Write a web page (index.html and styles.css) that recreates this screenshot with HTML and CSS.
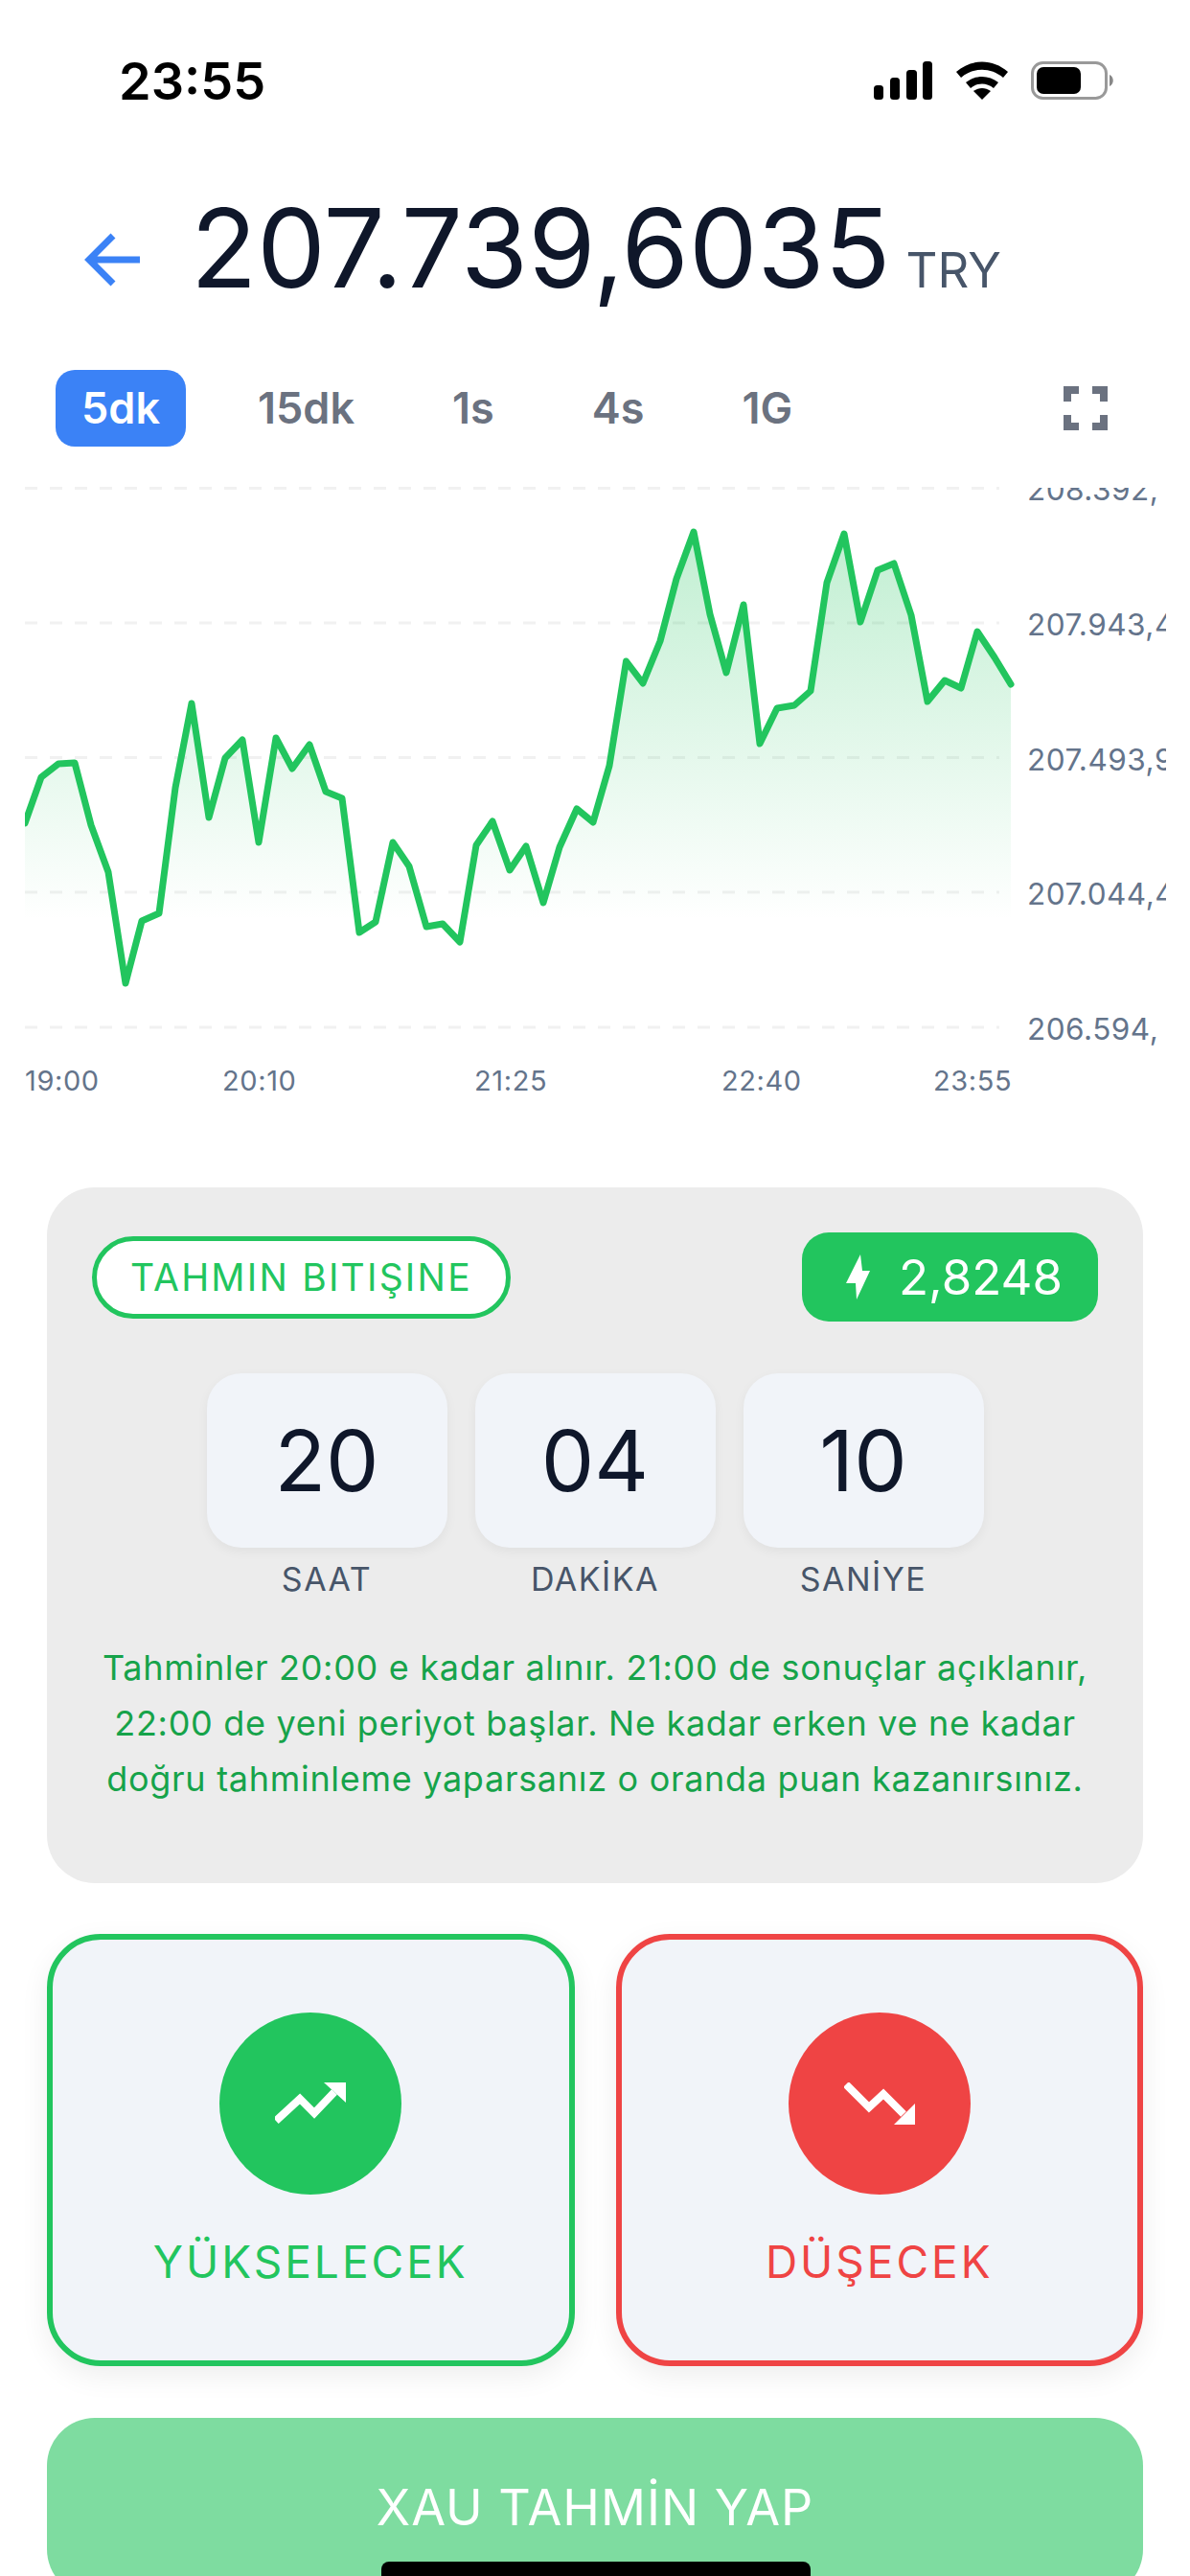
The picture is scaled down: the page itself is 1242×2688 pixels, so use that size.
FILE: index.html
```html
<!DOCTYPE html>
<html lang="tr">

<head>
    <meta charset="UTF-8">
    <title>XAU Tahmin</title>
    <link rel="stylesheet" href="styles.css">
</head>

<body>
    <div class="screen">
        <div class="status-bar">
            <span class="status-time">23:55</span>
            <svg class="status-icons" width="252" height="40" viewBox="0 0 252 40">
                <rect x="0" y="25" width="10" height="15" rx="3.5" />
                <rect x="17" y="17" width="10" height="23" rx="3.5" />
                <rect x="34" y="9" width="11" height="31" rx="3.5" />
                <rect x="51" y="0" width="10" height="40" rx="3.5" />
                <path d="M86 11 C 102 -3 124 -3 140 11 L 135 17 C 122 6 104 6 91 17 Z" />
                <path d="M96 22 C 106 14 120 14 130 22 L 125 28 C 118 22 108 22 101 28 Z" />
                <path d="M104 31 C 110 27 116 27 122 31 L 113 40 Z" />
                <rect x="165.500" y="1.500" width="77" height="37" rx="11" fill="#fff" stroke="#999" stroke-width="3" />
                <rect x="170" y="6" width="46" height="28" rx="7" />
                <path d="M246 14 C 251 16 251 24 246 26 Z" fill="#888" />
            </svg>
        </div>

        <div class="price-row">
            <svg class="back-icon" width="60" height="60" viewBox="0 0 60 60">
                <path d="M59 29 H8 M31 4 L6 29 L31 54" />
            </svg>
            <span class="price">207.739,6035</span>
            <span class="currency">TRY</span>
        </div>

        <div class="tabs">
            <div class="tab tab-active">5dk</div>
            <div class="tab">15dk</div>
            <div class="tab">1s</div>
            <div class="tab">4s</div>
            <div class="tab">1G</div>
            <svg class="expand-icon" width="46" height="46" viewBox="0 0 46 46">
                <path d="M4 16 V4 H16 M30 4 H42 V16 M42 30 V42 H30 M16 42 H4 V30" />
            </svg>
        </div>

        <div class="chart">
            <svg class="chart-plot" width="1034" height="570" viewBox="26 505 1034 570">
                <defs>
                    <linearGradient id="areaFill" gradientUnits="userSpaceOnUse" x1="0" y1="555" x2="0" y2="960">
                        <stop offset="0" stop-color="#22c55e" stop-opacity="0.28" />
                        <stop offset="1" stop-color="#22c55e" stop-opacity="0" />
                    </linearGradient>
                </defs>
                <g class="grid-lines">
                    <line x1="26" x2="1043" y1="509.5" y2="509.5" />
                    <line x1="26" x2="1043" y1="650" y2="650" />
                    <line x1="26" x2="1043" y1="790.5" y2="790.5" />
                    <line x1="26" x2="1043" y1="931" y2="931" />
                    <line x1="26" x2="1043" y1="1072" y2="1072" />
                </g>
                <polygon class="area"
                    points="26,859 43,811 61,797 78,796 95,861 113,910 131,1026 148,961 166,953 183,822 200,734 218,853 235,791 253,772 270,879 288,770 305,802 323,777 340,826 357,833 375,973 392,962 410,879 427,904 445,967 462,964 480,983 497,882 514,857 532,908 549,883 567,942 584,884 602,844 619,858 636,799 653.5,690 671,713 689,669 706,604 724,555 741,641 758,702 776,631 793,776 811,739 829,736 846,721 863,608 881,557 898,649 916,595 933,588 951,642 968,732 986,710 1003,718 1020,659 1038,686 1055,714 1055,1075 26,1075" />
                <polyline class="line"
                    points="26,859 43,811 61,797 78,796 95,861 113,910 131,1026 148,961 166,953 183,822 200,734 218,853 235,791 253,772 270,879 288,770 305,802 323,777 340,826 357,833 375,973 392,962 410,879 427,904 445,967 462,964 480,983 497,882 514,857 532,908 549,883 567,942 584,884 602,844 619,858 636,799 653.5,690 671,713 689,669 706,604 724,555 741,641 758,702 776,631 793,776 811,739 829,736 846,721 863,608 881,557 898,649 916,595 933,588 951,642 968,732 986,710 1003,718 1020,659 1038,686 1055,714" />
            </svg>
            <div class="y-labels">
                <span class="y-label">208.392,</span>
                <span class="y-label">207.943,4</span>
                <span class="y-label">207.493,9</span>
                <span class="y-label">207.044,4</span>
                <span class="y-label">206.594,</span>
            </div>
            <div class="x-labels">
                <span class="x-label">19:00</span>
                <span class="x-label">20:10</span>
                <span class="x-label">21:25</span>
                <span class="x-label">22:40</span>
                <span class="x-label">23:55</span>
            </div>
        </div>

        <div class="panel">
            <div class="panel-top">
                <div class="ends-pill">TAHMIN BITIŞINE</div>
                <div class="reward-chip">
                    <svg width="25" height="47" viewBox="0 0 25 47">
                        <path d="M15 0 L0 30 H10 L11 47 L25 17 H17 Z" />
                    </svg>
                    <span>2,8248</span>
                </div>
            </div>
            <div class="countdown">
                <div class="count-col">
                    <div class="count-box">20</div>
                    <div class="count-label">SAAT</div>
                </div>
                <div class="count-col">
                    <div class="count-box">04</div>
                    <div class="count-label">DAKİKA</div>
                </div>
                <div class="count-col">
                    <div class="count-box">10</div>
                    <div class="count-label">SANİYE</div>
                </div>
            </div>
            <p class="panel-note">Tahminler 20:00 e kadar alınır. 21:00 de sonuçlar açıklanır,<br>22:00 de yeni periyot başlar. Ne kadar erken ve ne kadar<br>doğru tahminleme yaparsanız o oranda puan kazanırsınız.</p>
        </div>

        <div class="choices">
            <div class="choice choice-up">
                <div class="choice-circle">
                    <svg width="74" height="44" viewBox="0 0 74 44">
                        <path class="trend" d="M1 40 L26 17 L41 32 L62 10" />
                        <path d="M51 0 H74 V21 Z" fill="#fff" />
                    </svg>
                </div>
                <div class="choice-label">YÜKSELECEK</div>
            </div>
            <div class="choice choice-down">
                <div class="choice-circle">
                    <svg width="74" height="44" viewBox="0 0 74 44">
                        <path class="trend" d="M2 2 L26 26 L41 12 L62 33" />
                        <path d="M52 44 H74 V22 Z" fill="#fff" />
                    </svg>
                </div>
                <div class="choice-label">DÜŞECEK</div>
            </div>
        </div>

        <div class="submit-btn">XAU TAHMİN YAP</div>
        <div class="home-bar"></div>
    </div>
</body>

</html>
```

FILE: styles.css
```css
body {
    margin: 0;
    background: #fff;
    font-family: Inter, "Liberation Sans", sans-serif;
}

.screen {
    position: relative;
    width: 1242px;
    height: 2688px;
    overflow: hidden;
    box-sizing: border-box;
    padding-top: 54px;
}

.status-bar {
    display: flex;
    justify-content: space-between;
    align-items: center;
    height: 60px;
    padding: 0 78px 0 124px;
}

.status-time {
    font-size: 54px;
    font-weight: 600;
    color: #000;
}

.status-icons {
    display: block;
}

.price-row {
    display: flex;
    align-items: baseline;
    height: 134px;
    margin-top: 76px;
    padding-left: 87px;
}

/* sits lower than the price text */
.back-icon {
    align-self: flex-end;
    margin: 0 52px 22px 0;
    fill: none;
    stroke: #3b82f6;
    stroke-width: 7;
}

.price {
    font-size: 113.5px;
    color: #0f172a;
}

.currency {
    font-size: 51px;
    color: #475569;
    margin-left: 16px;
}

.tabs {
    display: flex;
    align-items: center;
    gap: 48px;
    margin-top: 62px;
    padding: 0 86px 0 58px;
}

.tab {
    height: 80px;
    line-height: 80px;
    padding: 0 27px;
    border-radius: 20px;
    font-size: 45px;
    font-weight: 600;
    color: #6b7280;
}

.tab-active {
    background: #3b82f6;
    color: #fff;
}

.expand-icon {
    margin-left: auto;
    fill: none;
    stroke: #6b7280;
    stroke-width: 8;
}

.chart {
    position: relative;
    height: 734px;
    margin-top: 39px;
    overflow: hidden;
}

.chart-plot {
    position: absolute;
    left: 26px;
    top: 0;
}

.grid-lines line {
    stroke: #f1f1f1;
    stroke-width: 3;
    stroke-dasharray: 13 13;
}

.area {
    fill: url(#areaFill);
}

.line {
    fill: none;
    stroke: #22c55e;
    stroke-width: 7;
    stroke-linejoin: round;
    stroke-linecap: round;
}

.y-labels {
    position: absolute;
    left: 1072px;
    top: 4px;
    width: 145px;
    height: 590px;
    overflow: hidden;
}

.y-label {
    position: absolute;
    left: 0;
    white-space: nowrap;
    font-size: 31.5px;
    line-height: 40px;
    letter-spacing: 0.5px;
    color: #64748b;
}

.y-label:nth-child(1) { top: -18px; }
.y-label:nth-child(2) { top: 123px; }
.y-label:nth-child(3) { top: 264px; }
.y-label:nth-child(4) { top: 404px; }
.y-label:nth-child(5) { top: 545px; }

.x-labels {
    position: absolute;
    left: 0;
    top: 603px;
    width: 100%;
    height: 40px;
}

.x-label {
    position: absolute;
    font-size: 29px;
    line-height: 40px;
    letter-spacing: 0.6px;
    color: #64748b;
}

.x-label:nth-child(1) { left: 26px; }
.x-label:nth-child(2) { left: 232px; }
.x-label:nth-child(3) { left: 495px; }
.x-label:nth-child(4) { left: 753px; }
.x-label:nth-child(5) { left: 974px; }

.panel {
    box-sizing: border-box;
    width: 1144px;
    height: 726px;
    margin: 0 0 0 49px;
    padding: 47px 47px 0;
    border-radius: 50px;
    background: #ececec;
}

.panel-top {
    display: flex;
    justify-content: space-between;
    align-items: center;
}

.ends-pill {
    box-sizing: border-box;
    height: 86px;
    line-height: 76px;
    padding: 0 35px;
    border: 5px solid #22c55e;
    border-radius: 43px;
    background: #fff;
    color: #22c55e;
    font-size: 39px;
    letter-spacing: 2.2px;
}

.reward-chip {
    display: flex;
    align-items: center;
    gap: 30px;
    height: 93px;
    padding: 0 37px 0 46px;
    border-radius: 28px;
    background: #22c55e;
    color: #fff;
    font-size: 51px;
}

.reward-chip svg {
    fill: #fff;
}

.countdown {
    display: flex;
    justify-content: center;
    gap: 29px;
    margin-top: 54px;
}

.count-col {
    width: 251px;
}

.count-box {
    height: 182px;
    line-height: 182px;
    text-align: center;
    border-radius: 36px;
    background: #f1f4f9;
    box-shadow: 0 4px 12px rgba(0, 0, 0, 0.05);
    color: #0f172a;
    font-size: 88px;
}

.count-label {
    margin-top: 13px;
    text-align: center;
    font-size: 34px;
    line-height: 40px;
    letter-spacing: 1.5px;
    color: #475569;
}

.panel-note {
    margin: 43px 0 0;
    text-align: center;
    font-size: 36px;
    line-height: 58px;
    letter-spacing: 0.7px;
    color: #16a34a;
}

.choices {
    display: flex;
    gap: 43px;
    margin: 53px 49px 0;
}

.choice {
    box-sizing: border-box;
    flex: 1;
    height: 451px;
    padding-top: 76px;
    border: 6px solid;
    border-radius: 56px;
    background: #f1f4f9;
    box-shadow: 0 10px 30px rgba(0, 0, 0, 0.07);
    text-align: center;
}

.choice-up {
    border-color: #22c55e;
    color: #22c55e;
}

.choice-down {
    border-color: #ef4444;
    color: #ef4444;
}

.choice-circle {
    display: flex;
    justify-content: center;
    align-items: center;
    width: 190px;
    height: 190px;
    margin: 0 auto;
    border-radius: 50%;
    background: currentColor;
}

.trend {
    fill: none;
    stroke: #fff;
    stroke-width: 8;
}

.choice-label {
    margin-top: 42px;
    font-size: 46px;
    line-height: 56px;
    letter-spacing: 3px;
}

.submit-btn {
    height: 187px;
    line-height: 187px;
    margin: 54px 49px 0;
    border-radius: 50px;
    background: #7edca0;
    color: #fff;
    text-align: center;
    font-size: 52px;
    letter-spacing: 1px;
}

.home-bar {
    position: absolute;
    left: 398px;
    bottom: 0;
    width: 448px;
    height: 15px;
    border-radius: 8px 8px 0 0;
    background: #000;
}
```
